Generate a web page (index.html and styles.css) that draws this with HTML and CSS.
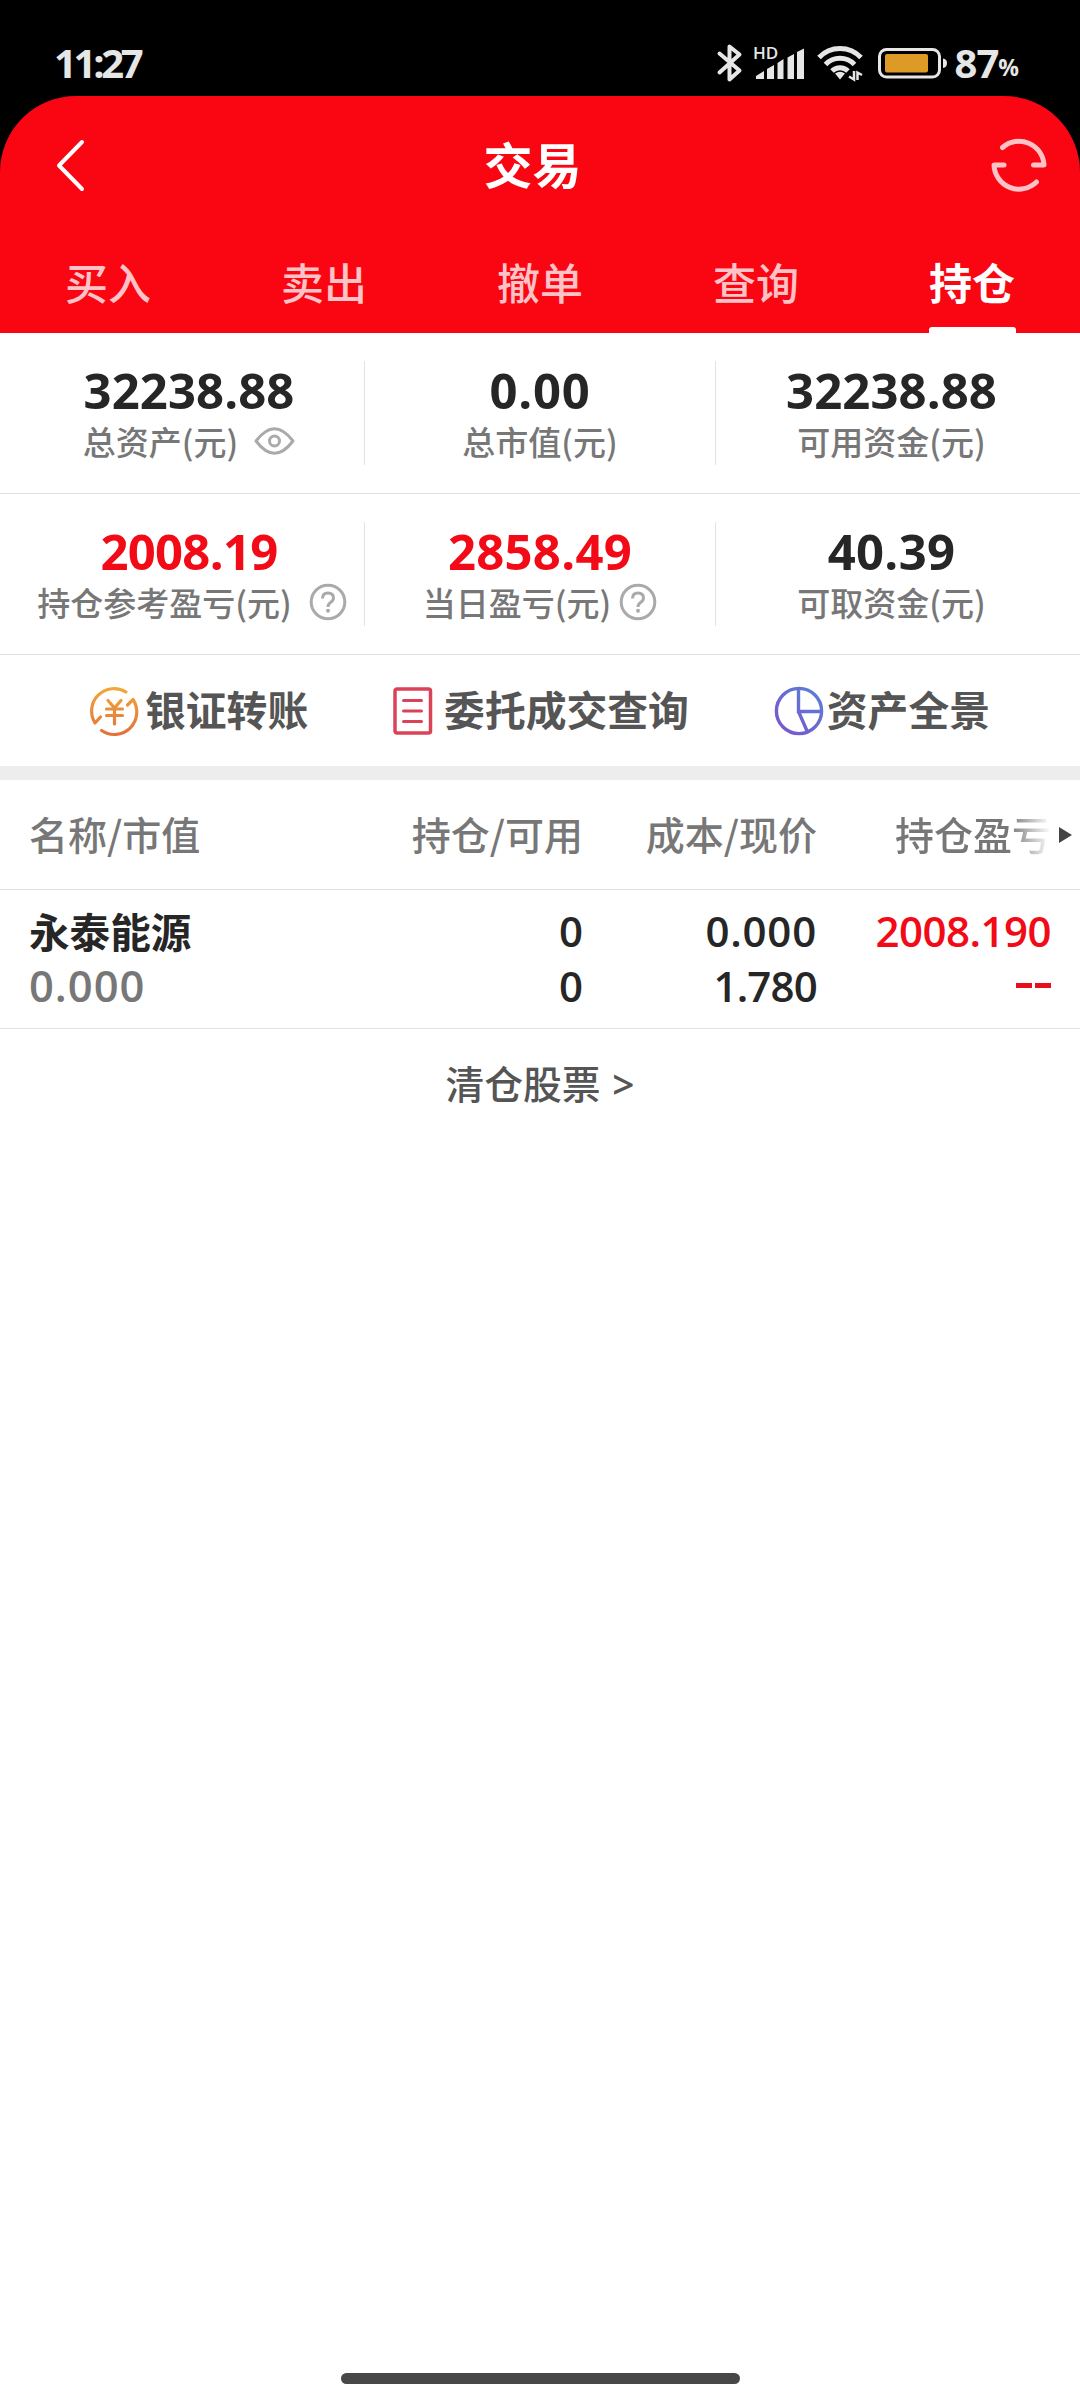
FILE: index.html
```html
<!DOCTYPE html>
<html lang="zh-CN">
<head>
    <meta charset="UTF-8">
    <meta name="viewport" content="width=device-width, initial-scale=1.0">
    <title>交易</title>
    <link rel="stylesheet" href="styles.css">
</head>
<body>
    <div class="status-bar">
        <span class="time">11:27</span>
        <div class="status-icons">
            <svg class="bluetooth" width="26" height="40" viewBox="0 0 26 40" fill="none" stroke="#e6e6e6" stroke-width="4" stroke-linejoin="round" stroke-linecap="round">
                <path d="M2.500 10.500 L22.500 27.500 L12.500 36.500 V3.500 L22.500 11.500 L2.500 29.500"/>
            </svg>
            <svg class="signal" width="52" height="34" viewBox="0 0 52 34" fill="#e6e6e6">
                <text x="-1" y="13" class="hd">HD</text>
                <path d="M2 33 V30 L10 25 V33 Z M13 33 V23 L20 19 V33 Z M23.500 33 V17 L29.500 13 V33 Z M33.500 33 V11.500 L40 8 V33 Z M43 33 V6 L50 2.500 V33 Z"/>
            </svg>
            <svg class="wifi" width="46" height="36" viewBox="0 0 46 36" fill="none" stroke="#e6e6e6" stroke-width="5">
                <path d="M2 12.500 A29 29 0 0 1 44 12.500"/>
                <path d="M8.500 19.500 A20 20 0 0 1 37.500 19.500"/>
                <path d="M15 26 A11.500 11.500 0 0 1 31 26"/>
                <path d="M18 28.500 Q23 25 28 28.500 L23 34.500 Z" fill="#e6e6e6" stroke="none"/>
                <path d="M32 31.500 L37 34.500 V26 M40.500 35 V27.500 L45 30" stroke-width="2.500"/>
            </svg>
            <svg class="battery" width="70" height="32" viewBox="0 0 70 32">
                <rect x="1.500" y="2.500" width="60" height="27.500" rx="7" fill="none" stroke="#e6e6e6" stroke-width="3"/>
                <rect x="7" y="7" width="43" height="18.500" rx="2" fill="#dd9a27"/>
                <path d="M65 11.500 Q69 12 69 16 Q69 20.500 65 21 Z" fill="#e6e6e6"/>
            </svg>
            <span class="level">87</span><span class="percent">%</span>
        </div>
    </div>

    <header>
        <div class="title-bar">
            <svg width="34" height="60" viewBox="0 0 34 60" fill="none" stroke="#fff" stroke-width="4" stroke-linecap="round" stroke-linejoin="round">
                <path d="M28 7 L5 30.500 L28 54"/>
            </svg>
            <h1>交易</h1>
            <svg width="58" height="58" viewBox="0 0 58 58" fill="none" stroke="#ffc2c6" stroke-width="5" stroke-linecap="round" stroke-linejoin="round">
                <path d="M12.500 11.500 A25 25 0 0 1 54 29 H43.500"/>
                <path d="M46.500 46 A25 25 0 0 1 4 29 H14"/>
            </svg>
        </div>
        <nav class="tabs">
            <a>买入</a>
            <a>卖出</a>
            <a>撤单</a>
            <a>查询</a>
            <a class="active">持仓</a>
        </nav>
    </header>

    <section class="assets">
        <div class="asset-row">
            <div class="asset">
                <strong class="n1">32238.88</strong>
                <p>总资产(元)
                    <svg class="eye" width="41" height="28" viewBox="0 0 41 28" fill="none" stroke="#aaa" stroke-width="3">
                        <path d="M2 14 Q20.500 -10.500 39 14 Q20.500 38.500 2 14 Z" stroke-linejoin="round"/>
                        <circle cx="20.500" cy="14" r="5"/>
                    </svg>
                </p>
            </div>
            <div class="asset">
                <strong class="n2">0.00</strong>
                <p>总市值(元)</p>
            </div>
            <div class="asset">
                <strong class="n1">32238.88</strong>
                <p>可用资金(元)</p>
            </div>
        </div>
        <div class="asset-row">
            <div class="asset">
                <strong class="n3 red">2008.19</strong>
                <p class="wide">持仓参考盈亏(元)
                    <svg class="help" width="38" height="38" viewBox="0 0 38 38" fill="none" stroke="#aaa" stroke-width="3">
                        <circle cx="19" cy="19" r="16.800"/>
                        <path d="M13.500 15.500 Q13.500 10 19 10 Q24.500 10 24.500 15 Q24.500 17.500 21.500 19.500 Q19 21.200 19 24"/>
                        <circle cx="19" cy="27.800" r="2" fill="#aaa" stroke="none"/>
                    </svg>
                </p>
            </div>
            <div class="asset">
                <strong class="n4 red">2858.49</strong>
                <p>当日盈亏(元)
                    <svg class="help" width="38" height="38" viewBox="0 0 38 38" fill="none" stroke="#aaa" stroke-width="3">
                        <circle cx="19" cy="19" r="16.800"/>
                        <path d="M13.500 15.500 Q13.500 10 19 10 Q24.500 10 24.500 15 Q24.500 17.500 21.500 19.500 Q19 21.200 19 24"/>
                        <circle cx="19" cy="27.800" r="2" fill="#aaa" stroke="none"/>
                    </svg>
                </p>
            </div>
            <div class="asset">
                <strong class="n4">40.39</strong>
                <p>可取资金(元)</p>
            </div>
        </div>
    </section>

    <section class="shortcuts">
        <a>
            <svg class="transfer" width="50" height="50" viewBox="0 0 50 50" fill="none" stroke="url(#orange)" stroke-width="3.200" stroke-linecap="round" stroke-linejoin="round">
                <defs>
                    <linearGradient id="orange" gradientUnits="userSpaceOnUse" x1="0" y1="0" x2="0" y2="50">
                        <stop offset="0" stop-color="#f2a93b"/>
                        <stop offset="1" stop-color="#e2703a"/>
                    </linearGradient>
                </defs>
                <path d="M37 6 A22.500 22.500 0 0 0 6 37 L11.500 31"/>
                <path d="M12.500 44.500 A22.500 22.500 0 0 0 44 13.500 L38.500 19"/>
                <path d="M19 14.500 L25.500 22 L32 14.500 M17.500 23 H33.500 M17.500 29.500 H33.500 M25.500 22 V38"/>
            </svg>
            <span>银证转账</span>
        </a>
        <a>
            <svg class="orders" width="40" height="48" viewBox="0 0 40 48" fill="none" stroke="#dc4257" stroke-width="3.500" stroke-linecap="round">
                <rect x="2" y="2" width="35.500" height="44" rx="2"/>
                <path d="M10.500 13.500 H28.500 M10.500 24 H28.500 M10.500 34.500 H28.500" stroke-width="3"/>
            </svg>
            <span>委托成交查询</span>
        </a>
        <a>
            <svg class="panorama" width="50" height="50" viewBox="0 0 50 50" fill="none" stroke="url(#purple)" stroke-width="3.400">
                <defs>
                    <linearGradient id="purple" gradientUnits="userSpaceOnUse" x1="45" y1="5" x2="10" y2="45">
                        <stop offset="0" stop-color="#5b7fd3"/>
                        <stop offset="1" stop-color="#7758cf"/>
                    </linearGradient>
                </defs>
                <circle cx="25" cy="25" r="22.600"/>
                <path d="M24.500 2 V25.500 H47.500 M24.500 25.500 L33.500 46"/>
            </svg>
            <span>资产全景</span>
        </a>
    </section>

    <section class="holdings">
        <div class="holding-head">
            <span>名称/市值</span>
            <span>持仓/可用</span>
            <span>成本/现价</span>
            <span class="fade">持仓盈亏</span>
            <i class="more"></i>
        </div>
        <div class="holding-row">
            <div class="cell">
                <span class="stock">永泰能源</span>
                <span class="worth">0.000</span>
            </div>
            <div class="cell">
                <span>0</span>
                <span>0</span>
            </div>
            <div class="cell">
                <span class="cost">0.000</span>
                <span class="price">1.780</span>
            </div>
            <div class="cell red">
                <span class="profit">2008.190</span>
                <span class="dashes"><i></i><i></i></span>
            </div>
        </div>
        <a class="cleared">清仓股票 <span>&gt;</span></a>
    </section>

    <div class="home-bar"></div>
</body>
</html>
```
FILE: styles.css
```css
* {
    box-sizing: border-box;
}

body {
    margin: 0;
    width: 1080px;
    height: 2400px;
    display: flex;
    flex-direction: column;
    background-color: #fff;
    color: #262626;
    font-family: "Noto Sans CJK SC", sans-serif;
    font-weight: 500;
    overflow: hidden;
}

svg {
    display: block;
    flex: none;
    overflow: visible;
}

h1, p {
    margin: 0;
}

/* status bar */
.status-bar {
    height: 96px;
    padding: 31px 61px 0 54px;
    display: flex;
    justify-content: space-between;
    background-color: #000;
    color: #e6e6e6;
    font-family: "Open Sans", sans-serif;
    font-weight: 700;
}

.time {
    font-size: 40px;
    line-height: 64px;
    letter-spacing: -3.3px;
}

.status-icons {
    display: flex;
    align-items: center;
    height: 64px;
}

.signal {
    margin-left: 11px;
}

.hd {
    font-size: 17px;
    font-weight: 600;
}

.wifi {
    margin-left: 11px;
}

.battery {
    margin-left: 15px;
}

.level {
    margin-left: 7px;
    margin-top: -2px;
    font-size: 40px;
    letter-spacing: -1px;
}

.percent {
    font-size: 23px;
    margin-top: 8px;
}

/* header */
header {
    height: 237px;
    background: linear-gradient(#000, #000) top / 100% 80px no-repeat, #fa0613;
    color: #fff;
}

.title-bar {
    height: 138px;
    padding: 0 32px 0 54px;
    display: flex;
    justify-content: space-between;
    align-items: center;
    background-color: #fa0613;
    border-radius: 76px 76px 0 0;
}

.title-bar h1 {
    font-size: 49px;
    font-weight: 700;
    line-height: 60px;
    margin: -4px 0 0 -13px;
}

.tabs {
    display: flex;
    height: 99px;
}

.tabs a {
    flex: 1;
    display: flex;
    flex-direction: column;
    align-items: center;
    justify-content: space-between;
    font-size: 43px;
    line-height: 94px;
    color: #ffc2c6;
}

.tabs .active {
    color: #fff;
    font-weight: 700;
}

.tabs .active::after {
    content: "";
    width: 87px;
    height: 6px;
    margin-top: -1px;
    border-radius: 3px 3px 0 0;
    background-color: #fff;
}

/* assets */
.asset-row {
    height: 161px;
    padding: 28px 13px 0 14px;
    display: flex;
    border-bottom: 1px solid #e2e2e2;
}

.asset {
    width: 351px;
    height: 104px;
    display: flex;
    flex-direction: column;
    align-items: center;
    border-right: 1px solid #e2e2e2;
}

.asset:last-child {
    border-right: none;
}

.asset strong {
    font-family: "Open Sans", sans-serif;
    font-size: 49px;
    font-weight: 700;
    line-height: 58px;
}

.asset p {
    display: flex;
    align-items: center;
    font-size: 33px;
    line-height: 44px;
    color: #777;
}

.asset .wide {
    margin-left: 6px;
}

.n1 {
    letter-spacing: 0.1px;
}

.n2 {
    letter-spacing: 0.8px;
}

.n3 {
    letter-spacing: -0.7px;
}

.n4 {
    letter-spacing: 0.3px;
}

.red {
    color: #f20a17;
}

.eye {
    margin-left: 16px;
}

.help {
    margin-left: 8px;
}

.wide .help {
    margin-left: 17px;
}

/* shortcuts */
.shortcuts {
    height: 125px;
    padding: 0 90px 0 89px;
    display: flex;
    justify-content: space-between;
    border-bottom: 14px solid #ededed;
}

.shortcuts a {
    display: flex;
    align-items: center;
    font-size: 40.8px;
    font-weight: 700;
    color: #555;
}

.shortcuts span {
    margin-top: -4px;
}

.transfer {
    margin-right: 6px;
}

.orders {
    margin-right: 11px;
}

.panorama {
    margin-right: 3px;
}

/* holdings */
.holding-head, .holding-row {
    display: grid;
    grid-template-columns: 260px 294px 234px 234px 1fr;
    padding-left: 29px;
    border-bottom: 1px solid #e2e2e2;
}

.holding-head {
    height: 110px;
    align-items: center;
    font-size: 39px;
    color: #777;
}

.holding-head span {
    margin-top: -4px;
}

.holding-head span + span {
    text-align: right;
}

.holding-head .fade {
    background: linear-gradient(to right, #777 82%, #fff 100%);
    background-clip: text;
    -webkit-background-clip: text;
    color: transparent;
}

.more {
    justify-self: start;
    margin-left: 8px;
    border-left: 13px solid #444;
    border-top: 8px solid transparent;
    border-bottom: 8px solid transparent;
}

.holding-row {
    height: 139px;
    padding-top: 13px;
}

.cell {
    display: flex;
    flex-direction: column;
    align-items: flex-end;
    font-family: "Open Sans", sans-serif;
    font-size: 42px;
    font-weight: 600;
    line-height: 55px;
}

.cell:first-child {
    align-items: flex-start;
}

.stock {
    font-family: "Noto Sans CJK SC", sans-serif;
    font-size: 40.6px;
    font-weight: 700;
}

.worth {
    font-size: 43.5px;
    letter-spacing: 1px;
    color: #777;
}

.cost {
    letter-spacing: 0.8px;
}

.price {
    letter-spacing: -0.8px;
}

.profit {
    letter-spacing: -0.5px;
}

.dashes {
    display: flex;
    align-items: center;
    gap: 3px;
    height: 55px;
}

.dashes i {
    width: 16px;
    height: 5px;
    background-color: #e60f1c;
}

.cleared {
    display: block;
    text-align: center;
    font-size: 38.8px;
    line-height: 106px;
    color: #555;
}

.cleared span {
    margin-left: 3px;
    font-family: "Open Sans", sans-serif;
    font-weight: 600;
}

.home-bar {
    width: 399px;
    height: 11px;
    margin: auto auto 16px;
    border-radius: 6px;
    background-color: #484848;
}
```
